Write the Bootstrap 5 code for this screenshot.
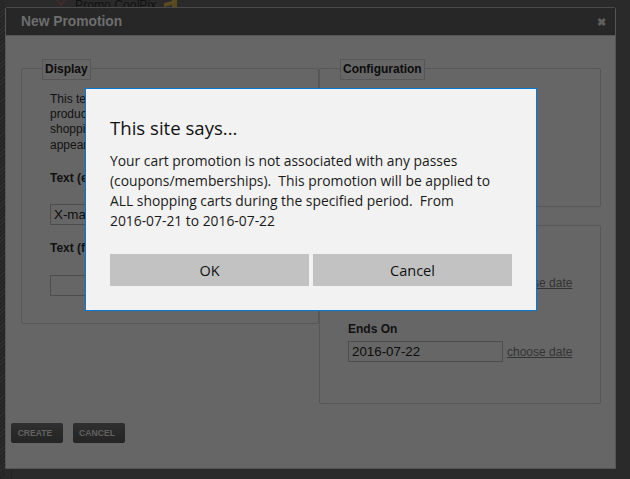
<!DOCTYPE html>
<html lang="en">
<head>
<meta charset="utf-8">
<title>New Promotion</title>
<link rel="stylesheet" href="https://cdn.jsdelivr.net/npm/bootstrap@5.3.0/dist/css/bootstrap.min.css">
<style>
html,body{height:100%;}
body{background:#2a2a2a;font-family:"Liberation Sans",Arial,sans-serif;font-size:12px;color:#000;overflow:hidden;position:relative;}
.hatch{position:absolute;left:0;top:0;bottom:0;width:5px;background:repeating-linear-gradient(135deg,#2f2f2f 0 1px,#252525 1px 3px);}
.foot-line{position:absolute;left:11px;top:469px;bottom:0;width:1px;background:#222;}
.top-strip{height:7px;overflow:hidden;display:flex;align-items:flex-start;position:relative;}
.top-text{margin-top:-2px;margin-left:75px;font-size:12.2px;line-height:14px;color:#111;white-space:nowrap;}
.ic-a{position:absolute;left:56px;top:0;}
.ic-b{position:absolute;left:164px;top:0;}
.win{width:611px;height:462px;margin-left:5px;background:#666;border:1px solid #555;border-top-color:#4a4a4a;border-radius:3px 3px 0 0;display:flex;flex-direction:column;position:relative;}
.win-head{height:28px;flex:none;background:#272727;border-bottom:1px solid #555;padding:1px 9px 0 15px;color:#6e6e6e;font-size:13.8px;font-weight:700;}
.win-x{color:#5f5f5f;font-size:11px;}
.win-body{flex:1;padding:0 15px;position:relative;}
.cols{display:flex;margin-top:32px;}
.col-l{width:298px;flex:none;}
.col-r{width:282px;flex:none;}
.fs{border:1px solid #575757;border-radius:2px;position:relative;padding:23px 28px 0;}
.fs-a{height:256px;}
.fs-b{height:139px;}
.fs-c{height:179px;margin-top:18px;padding-top:46px;}
.lg{position:absolute;top:-10px;left:20px;height:21px;border:1px solid #575757;background:#666;font-weight:700;padding:0 2px;line-height:19px;color:#0c0c0c;}
.blurb{line-height:15.2px;white-space:nowrap;margin:0 0 18px;color:#111;}
.lab{font-weight:700;line-height:14px;color:#111;}
.lab-a{margin-bottom:19px;}
.lab-b{margin:16px 0 20px;}
.lab-c{margin:29px 0 5px;}
.inp{border:1px solid #4d4d4d;height:21px;line-height:19px;padding:0 3px;font-size:13.33px;background:#666;color:#0c0c0c;width:155px;flex:none;}
.date-lnk{color:#333;text-decoration:underline;margin-left:4px;white-space:nowrap;}
.act{position:absolute;left:5px;top:387px;column-gap:10px;}
.act-b{width:52px;height:20px;background:linear-gradient(#2f2f2f,#242424);border:0;border-radius:2px;color:#626262;font-size:8.6px;font-weight:700;padding:0 4px 0 0;}
.dlg{position:absolute;left:85px;top:88px;width:452px;height:223px;background:#f2f2f2;border:1px solid #0078d7;padding:0 24px;font-family:"Open Sans","Noto Sans",sans-serif;color:#1a1a1a;}
.dlg-title{font-size:18.6px;line-height:28px;margin:25px 0 0;font-weight:400;color:#111;}
.dlg-text{font-size:13.85px;line-height:20px;margin:9px 0 0;white-space:pre-line;}
.dlg-acts{margin-top:23px;}
.dlg-btn{height:32px;flex:1;background:#c2c2c2;border:0;border-radius:0;font-size:14.5px;color:#111;padding:1px 0 0;}
</style>
</head>
<body>
<div class="hatch"></div>
<div class="foot-line"></div>
<div class="top-strip">
  <svg class="ic-a" width="10" height="7" viewBox="0 0 10 7" aria-hidden="true"><path d="M1 0L5 5L9 0" fill="none" stroke="#4a2a2a" stroke-width="1.5"/></svg>
  <div class="top-text">Promo CoolPix</div>
  <svg class="ic-b" width="14" height="7" viewBox="0 0 14 7" aria-hidden="true"><path d="M0 3L8 1V0H13V7H8V5L0 7Z" fill="#5a4a20"/></svg>
</div>
<div class="win">
  <div class="win-head d-flex align-items-center justify-content-between"><span>New Promotion</span><span class="win-x">&#10006;</span></div>
  <div class="win-body">
    <div class="cols">
      <div class="col-l">
        <div class="fs fs-a">
          <div class="lg">Display</div>
          <p class="blurb">This text<br>product<br>shopping<br>appears</p>
          <div class="lab lab-a">Text (en)</div>
          <div class="inp">X-mas</div>
          <div class="lab lab-b">Text (fr)</div>
          <div class="inp"></div>
        </div>
      </div>
      <div class="col-r">
        <div class="fs fs-b"><div class="lg">Configuration</div></div>
        <div class="fs fs-c">
          <div class="d-flex align-items-center"><div class="inp">2016-07-21</div><span class="date-lnk">choose date</span></div>
          <div class="lab lab-c">Ends On</div>
          <div class="d-flex align-items-center"><div class="inp">2016-07-22</div><span class="date-lnk">choose date</span></div>
        </div>
      </div>
    </div>
    <div class="act d-flex"><button class="act-b">CREATE</button><button class="act-b">CANCEL</button></div>
  </div>
</div>
<div class="dlg">
  <h5 class="dlg-title">This site says...</h5>
  <p class="dlg-text">Your cart promotion is not associated with any passes
(coupons/memberships).&nbsp; This promotion will be applied to
ALL shopping carts during the specified period.&nbsp; From
2016-07-21 to 2016-07-22</p>
  <div class="d-flex gap-1 dlg-acts"><button class="dlg-btn">OK</button><button class="dlg-btn">Cancel</button></div>
</div>
<script src="https://cdn.jsdelivr.net/npm/bootstrap@5.3.0/dist/js/bootstrap.bundle.min.js"></script>
</body>
</html>
